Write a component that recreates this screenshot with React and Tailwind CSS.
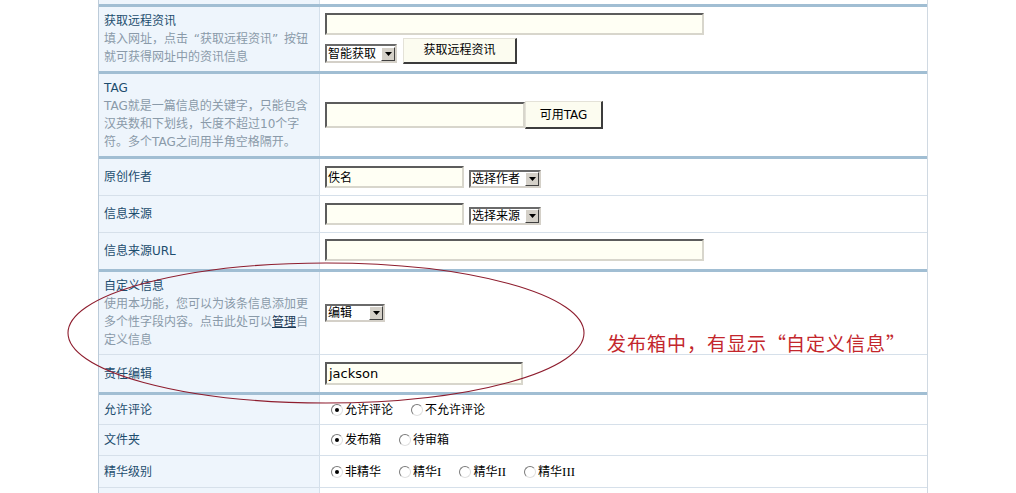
import React from 'react';

const FONT = '"DejaVu Sans", "Noto Sans CJK SC", sans-serif';

const Row = ({ className, label, children, right = 'items-center' }) => (
  <div className={`flex ${className}`}>
    <div className="w-[221px] shrink-0 bg-[#eef5fc] border-r border-[#d4e0eb] pl-[5px] flex items-center">
      {label}
    </div>
    <div className={`flex-1 flex pl-[5px] ${right}`}>{children}</div>
  </div>
);

const Input = ({ className, value = '' }) => (
  <div
    className={`bg-[#fffff4] border-2 border-t-[#5c5c5c] border-l-[#5c5c5c] border-b-[#d8d6cc] border-r-[#d8d6cc] flex items-center pl-[1px] text-[12px] text-black ${className}`}
  >
    {value}
  </div>
);

const Select = ({ className, value }) => (
  <div
    className={`bg-white border-2 border-t-[#6a6a6a] border-l-[#6a6a6a] border-b-[#d4d0c8] border-r-[#d4d0c8] flex items-center justify-between text-[12px] leading-none text-black ${className}`}
  >
    <span className="pl-[1px]">{value}</span>
    <span className="w-[14px] h-[14px] bg-[#d4d0c8] border border-t-white border-l-white border-b-[#404040] border-r-[#404040] flex items-center justify-center">
      <svg width="7" height="4" viewBox="0 0 7 4">
        <path d="M0 0h7L3.5 4z" fill="#000" />
      </svg>
    </span>
  </div>
);

const Button = ({ className, children }) => (
  <div
    className={`bg-[#fcfcf0] border border-t-[#e4e2d8] border-l-[#e4e2d8] border-b-2 border-r-2 border-b-[#3c3c3c] border-r-[#3c3c3c] flex items-center justify-center text-[12px] text-black ${className}`}
  >
    {children}
  </div>
);

const Radio = ({ checked, children }) => (
  <div className="flex items-center mr-[18px]">
    <span className="w-[12px] h-[12px] rounded-full border border-t-[#7a7a7a] border-l-[#7a7a7a] border-b-[#e0e0e0] border-r-[#e0e0e0] bg-white flex items-center justify-center">
      {checked && <span className="w-[4px] h-[4px] rounded-full bg-black" />}
    </span>
    <span className="ml-[2px] text-[12px] text-black">{children}</span>
  </div>
);

// full-width curly quotes, as the page's CJK font draws them
const LQ = () => <span className="inline-block w-[1em] text-right">“</span>;
const RQ = () => <span className="inline-block w-[1em] text-left">”</span>;

const Title = ({ children }) => <div className="text-[12px] text-[#1d4d6e] leading-[18px] whitespace-nowrap">{children}</div>;
const Desc = ({ children }) => <div className="text-[12px] text-[#8a9aa9] leading-[18px] whitespace-nowrap">{children}</div>;

const thick = 'border-b-[3px] border-[#a1bed3]';
const thin = 'border-b border-[#d6e0ea]';
const roman = 'font-["Liberation_Serif"] text-[13px]';

export default function App() {
  return (
    <div className="relative w-[1016px] h-[493px] overflow-hidden bg-white" style={{ fontFamily: FONT }}>
      <div className="ml-[98px] w-[830px] h-[493px] border-l border-r border-l-[#bccbd9] border-r-[#d0d9e2]">
        <Row className={`h-[7px] ${thick}`} />

        <Row
          className={`h-[67px] ${thick}`}
          right="flex-col items-start pt-[6px]"
          label={
            <div className="self-start pt-[5px]">
              <Title>获取远程资讯</Title>
              <Desc>
                填入网址，点击<LQ />获取远程资讯<RQ />按钮
              </Desc>
              <Desc>就可获得网址中的资讯信息</Desc>
            </div>
          }
        >
          <Input className="w-[379px] h-[22px]" />
          <div className="flex items-end mt-[3px]">
            <Select className="w-[72px] h-[19px] mb-[1px]" value="智能获取" />
            <Button className="w-[114px] h-[26px] ml-[6px] pb-[2px]">获取远程资讯</Button>
          </div>
        </Row>

        <Row
          className={`h-[85px] ${thick}`}
          label={
            <div>
              <Title>TAG</Title>
              <Desc>TAG就是一篇信息的关键字，只能包含</Desc>
              <Desc>汉英数和下划线，长度不超过10个字</Desc>
              <Desc>符。多个TAG之间用半角空格隔开。</Desc>
            </div>
          }
        >
          <Input className="w-[200px] h-[26px]" />
          <Button className="w-[78px] h-[28px]">可用TAG</Button>
        </Row>

        <Row className={`h-[37px] ${thin}`} label={<Title>原创作者</Title>}>
          <Input className="w-[139px] h-[22px] items-start pt-[1px]" value="佚名" />
          <Select className="w-[72px] h-[18px] ml-[5px] mt-[4px]" value="选择作者" />
        </Row>

        <Row className={`h-[37px] ${thin}`} label={<Title>信息来源</Title>}>
          <Input className="w-[139px] h-[22px]" />
          <Select className="w-[72px] h-[18px] ml-[5px] mt-[4px]" value="选择来源" />
        </Row>

        <Row className={`h-[39px] ${thick}`} label={<Title>信息来源URL</Title>}>
          <Input className="w-[379px] h-[22px] -mt-[2px]" />
        </Row>

        <Row
          className={`h-[83px] ${thin}`}
          label={
            <div>
              <Title>自定义信息</Title>
              <Desc>使用本功能，您可以为该条信息添加更</Desc>
              <Desc>
                多个性字段内容。点击此处可以<span className="text-[#1b3a57] underline">管理</span>自
              </Desc>
              <Desc>定义信息</Desc>
            </div>
          }
        >
          <Select className="w-[60px] h-[18px]" value="编辑" />
        </Row>

        <Row className={`h-[40px] ${thick}`} label={<Title>责任编辑</Title>}>
          <Input className="w-[198px] h-[23px] text-[13px] pl-[2px]" value="jackson" />
        </Row>

        <Row className={`h-[30px] ${thin}`} right="items-center pl-[11px]" label={<Title>允许评论</Title>}>
          <Radio checked>允许评论</Radio>
          <Radio>不允许评论</Radio>
        </Row>

        <Row className={`h-[31px] ${thin}`} right="items-center pl-[11px]" label={<Title>文件夹</Title>}>
          <Radio checked>发布箱</Radio>
          <Radio>待审箱</Radio>
        </Row>

        <Row className={`h-[32px] ${thin}`} right="items-center pl-[11px]" label={<Title>精华级别</Title>}>
          <Radio checked>非精华</Radio>
          <Radio>
            精华<span className={roman}>I</span>
          </Radio>
          <Radio>
            精华<span className={roman}>II</span>
          </Radio>
          <Radio>
            精华<span className={roman}>III</span>
          </Radio>
        </Row>

        <Row className="h-[20px]" />
      </div>

      <svg className="absolute inset-0 pointer-events-none" width="1016" height="493">
        <ellipse cx="326" cy="333" rx="258" ry="70" fill="none" stroke="#8e1d2e" strokeWidth="1.1" />
      </svg>

      <div
        className="absolute left-[607px] top-[331px] text-[19px] leading-[24px] tracking-[1px] text-[#c3262c] whitespace-nowrap"
        style={{ fontFamily: '"Noto Sans CJK SC", sans-serif' }}
      >
        发布箱中，有显示<LQ />自定义信息<RQ />
      </div>
    </div>
  );
}
